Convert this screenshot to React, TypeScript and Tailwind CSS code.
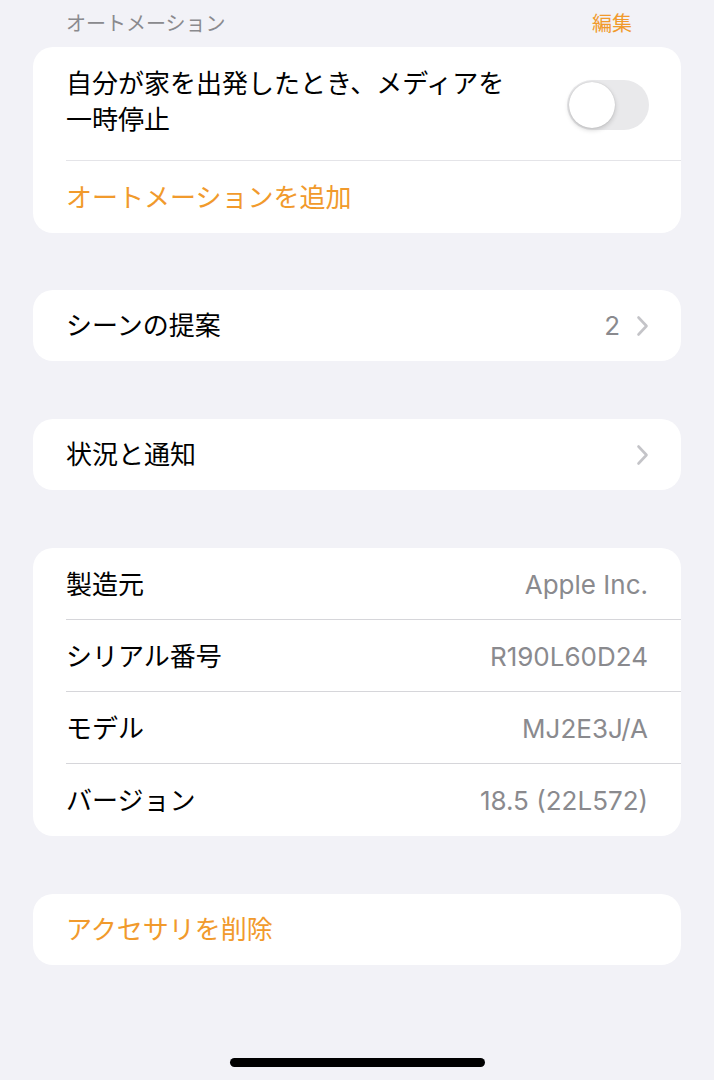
import React from "react";

const font = { fontFamily: '"Inter", "Noto Sans CJK JP", sans-serif' };

function Chevron() {
  return (
    <svg width="13" height="22" viewBox="0 0 13 22" fill="none">
      <path d="M2.5 2.5 L10.5 11 L2.5 19.5" stroke="#c4c4c8" strokeWidth="2.6" strokeLinecap="round" strokeLinejoin="round" />
    </svg>
  );
}

function InfoRow({ label, value, last }: { label: string; value: string; last?: boolean }) {
  return (
    <div className="relative flex h-[72px] items-center justify-between pl-[33px] pr-[33px]">
      <span className="text-[26px] text-black">{label}</span>
      <span className="text-[26px] text-[#8a8a8e]">{value}</span>
      {!last && <div className="absolute bottom-0 left-[33px] right-0 h-px bg-[#d6d6da]" />}
    </div>
  );
}

export default function App() {
  return (
    <div className="min-h-[1080px] w-[714px] bg-[#f2f2f7] relative" style={font}>
      <div className="flex h-[46px] items-center justify-between px-[66px] pt-[2px]">
        <span className="text-[20px] text-[#8a8a8e]">オートメーション</span>
        <span className="text-[20px] text-[#f19a2c] pr-[18px] -mr-[2px]">編集</span>
      </div>

      <div className="mx-[33px] mt-px rounded-[20px] bg-white">
        <div className="flex h-[113px] items-center justify-between pl-[33px] pr-[32px]">
          <span className="text-[26px] leading-[36px] text-black w-[460px] -mt-[4px]">
            自分が家を出発したとき、メディアを
            <br />
            一時停止
          </span>
          <div className="relative h-[50px] w-[82px] rounded-full bg-[#e9e9eb] mt-[2px]">
            <div className="absolute left-[2px] top-[2px] h-[46px] w-[46px] rounded-full bg-white shadow-[0_2px_5px_rgba(0,0,0,0.18),0_0_1px_rgba(0,0,0,0.2)]" />
          </div>
        </div>
        <div className="ml-[33px] h-px bg-[#e4e4e8]" />
        <div className="flex h-[72px] items-center pl-[33px]">
          <span className="text-[26px] text-[#f19a2c]">オートメーションを追加</span>
        </div>
      </div>

      <div className="mx-[33px] mt-[57px] flex h-[71px] items-center justify-between rounded-[20px] bg-white pl-[33px] pr-[32px]">
        <span className="text-[26px] text-black">シーンの提案</span>
        <div className="flex items-center gap-[16px]">
          <span className="text-[26px] text-[#8a8a8e]">2</span>
          <Chevron />
        </div>
      </div>

      <div className="mx-[33px] mt-[58px] flex h-[71px] items-center justify-between rounded-[20px] bg-white pl-[33px] pr-[32px]">
        <span className="text-[26px] text-black">状況と通知</span>
        <Chevron />
      </div>

      <div className="mx-[33px] mt-[58px] rounded-[20px] bg-white">
        <InfoRow label="製造元" value="Apple Inc." />
        <InfoRow label="シリアル番号" value="R190L60D24" />
        <InfoRow label="モデル" value="MJ2E3J/A" />
        <InfoRow label="バージョン" value="18.5 (22L572)" last />
      </div>

      <div className="mx-[33px] mt-[58px] flex h-[71px] items-center rounded-[20px] bg-white pl-[33px]">
        <span className="text-[26px] text-[#f19a2c]">アクセサリを削除</span>
      </div>

      <div className="absolute bottom-[13px] left-[230px] h-[9px] w-[255px] rounded-full bg-black" />
    </div>
  );
}
